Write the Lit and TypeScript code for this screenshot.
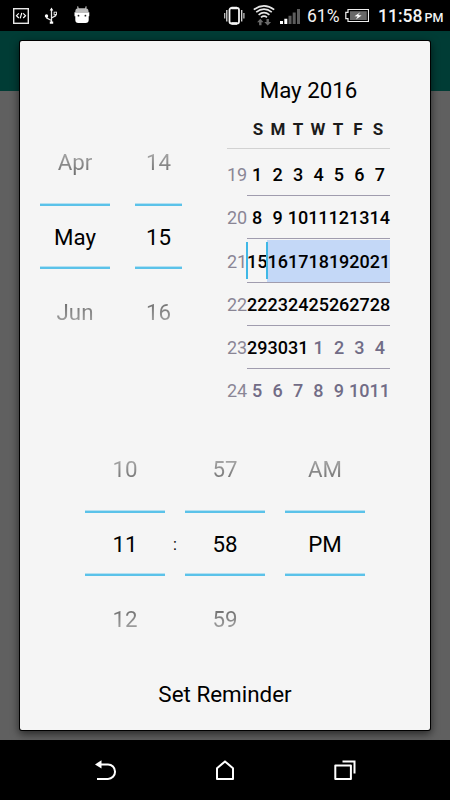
import { LitElement, html, css, svg } from "lit";
import { customElement, property } from "lit/decorators.js";
import { classMap } from "lit/directives/class-map.js";

@customElement("status-bar")
class StatusBar extends LitElement {
  static styles = css`
    :host { display: flex; align-items: center; height: 31px; background: #000; color: #f4f4f4; }
    svg { display: block; flex: none; }
    .dev { margin-left: 13px; }
    .usb { margin-left: 15px; }
    .droid { margin-left: 16px; }
    .vibrate { margin-left: auto; }
    .wifi { margin-left: 8px; }
    .signal { margin-left: 5px; }
    .percent { width: 34px; margin-left: 7px; font-size: 17.5px; line-height: 31px; padding-top: 2px; }
    .battery { margin-left: 4px; }
    .clock { width: 65px; margin: 0 7px 0 9px; font-size: 17.5px; line-height: 31px; font-weight: 500; padding-top: 2px; white-space: nowrap; }
    .clock small { font-size: 12.5px; margin-left: 2px; }
  `;
  render() {
    return html`
      <svg class="dev" width="16" height="31" viewBox="13 0 16 31">
        <rect x="13.700" y="8.700" width="14.600" height="14.600" fill="none" stroke="#e8e8e8" stroke-width="1.400" />
        <path d="M18.800 13.400l-2.300 2.300 2.300 2.300M23.200 13.400l2.300 2.300-2.300 2.300M21.800 12.800l-1.600 5.600" fill="none" stroke="#fff" stroke-width="1.200" />
      </svg>
      <svg class="usb" width="14" height="31" viewBox="44 0 14 31">
        <path d="M51.500 10v12M51.500 20.500L46.800 18v-2M51.500 18l4-2.200V14" fill="none" stroke="#ececec" stroke-width="1.300" />
        <path d="M51.500 7.600l1.800 3h-3.600zM49.800 21.600h3.400v2.200h-3.400z" fill="#fff" />
        <circle cx="46.500" cy="16" r="1.700" fill="#fff" />
        <rect x="54.100" y="12.200" width="2.400" height="2.600" fill="none" stroke="#ddd" />
      </svg>
      <svg class="droid" width="16" height="31" viewBox="73.500 0 16 31">
        <path d="M78 10l-.9-3.600M84.800 10l.9-3.600" stroke="#bbb" stroke-width="1.200" />
        <path d="M74.800 11.500q0-3.200 3.200-3.200h6.800q3.200 0 3.200 3.200v.6H74.800z" fill="#bdbdbd" />
        <path d="M74 12.200h14.800v4h-.6V20q0 3-3.200 3h-7.200q-3 0-3-3v-3.800H74z" fill="#fff" />
        <circle cx="78" cy="15.700" r=".9" fill="#222" />
        <circle cx="84.900" cy="15.700" r=".9" fill="#222" />
      </svg>
      <svg class="vibrate" width="21" height="31" viewBox="224 0 21 31">
        <rect x="229.500" y="8" width="9.500" height="15.500" rx="2" fill="none" stroke="#f4f4f4" stroke-width="1.800" />
        <path d="M231.500 8h5.500M231.500 23.500h5.500" stroke="#f4f4f4" stroke-width="2.400" />
        <path d="M226.800 10v11.500M241.700 10v11.500" stroke="#ddd" stroke-width="1.300" />
        <path d="M224.700 13v5.500M243.900 13v5.500" stroke="#ccc" stroke-width="1.200" />
      </svg>
      <svg class="wifi" width="22" height="31" viewBox="253 0 22 31">
        <path d="M253.800 9.600q10.200-7.600 20.400 0M256.200 12.200q7.800-6 15.600 0M258.600 14.800q5.400-4.200 10.800 0M261 17.300q3-2.400 6 0" fill="none" stroke="#e6e6e6" stroke-width="1.700" />
        <path d="M260.300 18.800l3.200 3.400h-2v3h-2.400v-3h-2zM267.700 25.600l-3.400-3.700h2.200v-2.800h2.400v2.800h2.200z" fill="#6b6b6b" />
      </svg>
      <svg class="signal" width="20" height="31" viewBox="280 0 20 31">
        <path d="M280 21h3v3h-3zM284.300 18.700h3V24h-3z" fill="#fff" />
        <path d="M288.500 15.800h3V24h-3zM292.700 12.500h3V24h-3zM297 9h3v15h-3z" fill="#5c5c5c" />
      </svg>
      <span class="percent">61%</span>
      <svg class="battery" width="24" height="31" viewBox="345 0 24 31">
        <path d="M348 9.500h20.500v12H348v-2.800h-2.200v-6.400h2.200z" fill="none" stroke="#eee" stroke-width="1.200" />
        <path d="M350 11.200h16.800v8.800H350z" fill="#686868" />
        <path d="M360.300 12.300l-5.800 3.900 3.200.3-1.800 3 5.700-4-3.400-.4z" fill="#fff" />
      </svg>
      <span class="clock">11:58<small>PM</small></span>
    `;
  }
}

@customElement("wheel-picker")
class WheelPicker extends LitElement {
  @property({ attribute: false }) values: string[] = [];
  static styles = css`
    :host { display: grid; grid-template-rows: 84px 65px 87px; text-align: center; font-size: 22.3px; color: #000; }
    .value { display: block; }
    .before, .after { color: transparent; -webkit-background-clip: text; background-clip: text; }
    .before { line-height: 84px; background-image: linear-gradient(#a4a4a4 34px, #707070 54px); }
    .current { box-sizing: border-box; line-height: 61px; border: solid #5bc2e9; border-width: 2px 0; padding-top: 1px;
      box-shadow: 0 -1px 0 #b4e0f1, inset 0 -1px 0 #b4e0f1; }
    .after { line-height: 87px; background-image: linear-gradient(#707070 34px, #a4a4a4 54px); }
  `;
  render() {
    const [before, current, after] = this.values;
    return html`
      <span class="value before">${before}</span>
      <span class="value current">${current}</span>
      <span class="value after">${after}</span>
    `;
  }
}

interface Day { n: number; other: boolean; }

@customElement("month-calendar")
class MonthCalendar extends LitElement {
  static styles = css`
    :host { display: block; width: 163px; color: #000; }
    .title { text-align: center; font-size: 22.3px; line-height: 30px; height: 43px; }
    .head, .days { display: grid; grid-template-columns: repeat(7, 1fr); text-align: center; }
    .head { margin: 0 2px 0 21px; font-size: 17px; font-weight: 700; line-height: 22px; color: #1c1c1c; }
    .rule { height: 1px; margin-top: 8px; background: #d2d2d2; }
    .weeks { margin-top: 3px; }
    .week { display: grid; grid-template-columns: 20px 143px; height: 43.3px; line-height: 45px; font-size: 18px; }
    .no { color: #8a8695; }
    .days { box-sizing: border-box; height: 44px; font-weight: 500; border-bottom: 1px solid #a09cae; }
    .week:last-child .days { border-bottom: 0; }
    .day { display: flex; justify-content: center; }
    .other { color: #716c86; }
    .active .day { height: 42px; line-height: 43px; margin-top: 1px; background: #c4d8f7; }
    .active .today { position: relative; background: none; }
    .today::before, .today::after { content: ""; position: absolute; top: 2px; height: 37px; width: 2px; background: #3fb8e6; }
    .today::before { left: -1px; }
    .today::after { right: -1px; }
  `;
  render() {
    const days: Day[] = Array.from({ length: 42 }, (_, i) => ({ n: i < 31 ? i + 1 : i - 30, other: i > 30 }));
    return html`
      <div class="title">May 2016</div>
      <div class="head">${["S", "M", "T", "W", "T", "F", "S"].map((d) => html`<span>${d}</span>`)}</div>
      <div class="rule"></div>
      <div class="weeks">
        ${[19, 20, 21, 22, 23, 24].map((no, w) => html`
          <div class="week">
            <span class="no">${no}</span>
            <div class=${classMap({ days: true, active: w === 2 })}>
              ${days.slice(w * 7, w * 7 + 7).map((d, i) => html`
                <span class=${classMap({ day: true, other: d.other, today: w === 2 && i === 0 })}>${d.n}</span>`)}
            </div>
          </div>`)}
      </div>
    `;
  }
}

@customElement("nav-bar")
class NavBar extends LitElement {
  static styles = css`
    :host { display: flex; justify-content: center; gap: 96px; align-items: center; height: 60px; background: #000; }
    svg { display: block; fill: none; stroke: #fff; stroke-width: 2; }
    .solid { fill: #fff; stroke: none; }
  `;
  icon(shape: unknown) {
    return html`<svg width="24" height="24" viewBox="0 -0.400 24 24">${shape}</svg>`;
  }
  render() {
    return html`
      ${this.icon(svg`<path d="M6 6h9a7 7.200 0 0 1 0 14.500H4" /><path class="solid" d="M2 6l6.500-4.200v8.400z" />`)}
      ${this.icon(svg`<path d="M4 20.500V9.800L12 3l8 6.800v10.700z" stroke-linejoin="round" />`)}
      ${this.icon(svg`<path d="M2.300 7h15.600v13.500H2.300z" stroke-linejoin="round" /><path d="M9.500 3h12v12" />`)}
    `;
  }
}

@customElement("app-root")
class AppRoot extends LitElement {
  static styles = css`
    :host { display: flex; flex-direction: column; height: 800px; overflow: hidden; font-family: Roboto, "Liberation Sans", sans-serif; }
    .screen { flex: 1; box-sizing: border-box; padding: 10px 20px; background: linear-gradient(#003c35 60px, #606060 60px); }
    .dialog { display: flex; flex-direction: column; box-sizing: border-box; height: 689px; background: #f5f5f5; border-radius: 2px;
      box-shadow: 0 0 0 1px #000, 0 3px 9px 1px rgba(0, 0, 0, 0.6); }
    .date { display: flex; height: 338px; padding: 34px 40px 0 20px; align-items: flex-start; }
    .month { width: 70px; margin: 45px 25px 0 0; }
    .dom { width: 47px; margin: 45px 45px 0 0; }
    .time { display: flex; justify-content: center; padding-top: 14px; }
    .time wheel-picker { width: 80px; }
    .colon { width: 20px; text-align: center; font-size: 16px; line-height: 20px; margin-top: 108px; }
    .meridiem { margin-left: 20px; }
    .set { border: 0; background: none; font: inherit; font-size: 22.4px; color: #000; line-height: 30px; margin-top: 16px; padding: 0; }
  `;
  render() {
    return html`
      <status-bar></status-bar>
      <div class="screen">
        <div class="dialog">
          <div class="date">
            <wheel-picker class="month" .values=${["Apr", "May", "Jun"]}></wheel-picker>
            <wheel-picker class="dom" .values=${["14", "15", "16"]}></wheel-picker>
            <month-calendar></month-calendar>
          </div>
          <div class="time">
            <wheel-picker .values=${["10", "11", "12"]}></wheel-picker>
            <span class="colon">:</span>
            <wheel-picker .values=${["57", "58", "59"]}></wheel-picker>
            <wheel-picker class="meridiem" .values=${["AM", "PM", ""]}></wheel-picker>
          </div>
          <button class="set">Set Reminder</button>
        </div>
      </div>
      <nav-bar></nav-bar>
    `;
  }
}
